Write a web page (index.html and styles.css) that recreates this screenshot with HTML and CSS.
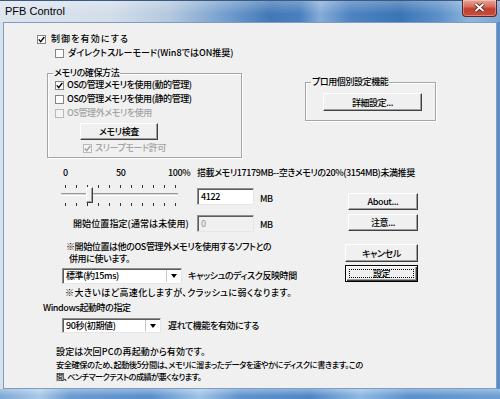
FILE: index.html
```html
<!doctype html>
<html>
  <head>
    <meta charset="utf-8">
    <meta name="viewport" content="width=device-width, initial-scale=1.0">
    <title>PFB Control</title>
    <link rel="stylesheet" href="styles.css">
  </head>
  <body>
    <div class="window">

      <!-- title bar -->
      <div class="titlebar">
        <span class="title">PFB Control</span>
        <div class="close">
          <svg width="33" height="15" viewBox="0 0 33 15">
            <path d="M12.5 4 L20.5 11 M20.5 4 L12.5 11" stroke="#4a1510" stroke-width="3.6" fill="none"/>
            <path d="M12.5 4 L20.5 11 M20.5 4 L12.5 11" stroke="#fff" stroke-width="2" fill="none"/>
          </svg>
        </div>
      </div>

      <div class="client">

        <!-- enable + memory method / pro settings -->
        <div class="section top">
          <div class="col-left">
            <div class="check enable">
              <span class="cb"><svg width="7" height="7" viewBox="0 0 7 7"><path d="M0.8 3.4 L2.7 5.6 L6.3 1" /></svg></span>制御を有効にする
            </div>
            <div class="check direct"><span class="cb"></span>ダイレクトスルーモード(Win8ではON推奨)</div>

            <fieldset class="group mem">
              <legend>メモリの確保方法</legend>
              <div class="check first">
                <span class="cb"><svg width="7" height="7" viewBox="0 0 7 7"><path d="M0.8 3.4 L2.7 5.6 L6.3 1" /></svg></span>OSの管理メモリを使用(動的管理)
              </div>
              <div class="check"><span class="cb"></span>OSの管理メモリを使用(静的管理)</div>
              <div class="check disabled"><span class="cb"></span>OS管理外メモリを使用</div>
              <button class="btn memcheck">メモリ検査</button>
              <div class="check disabled sleep">
                <span class="cb"><svg width="7" height="7" viewBox="0 0 7 7"><path d="M0.8 3.4 L2.7 5.6 L6.3 1" /></svg></span>スリープモード許可
              </div>
            </fieldset>
          </div>

          <div class="col-right">
            <fieldset class="group pro">
              <legend>プロ用個別設定機能</legend>
              <button class="btn detail">詳細設定...</button>
            </fieldset>
          </div>
        </div>

        <!-- memory size slider -->
        <div class="section slider-area">
          <div class="col-left">
            <div class="scale-row">
              <span class="s0">0</span>
              <span class="s50">50</span>
              <span class="s100">100%</span>
              <span class="mem-info">搭載メモリ17179MB--空きメモリの20%(3154MB)未満推奨</span>
            </div>

            <div class="size-row">
              <div class="slider">
                <div class="ticks">
                  <span></span><span></span><span></span><span></span><span></span><span></span>
                  <span></span><span></span><span></span><span></span><span></span>
                </div>
                <div class="track"></div>
                <div class="ticks bottom">
                  <span></span><span></span><span></span><span></span><span></span><span></span>
                  <span></span><span></span><span></span><span></span><span></span>
                </div>
                <div class="thumb"></div>
              </div>
              <div class="field size">4122</div>
              <span class="unit">MB</span>
            </div>

            <div class="start-row">
              <span class="start-label">開始位置指定(通常は未使用)</span>
              <div class="field off">0</div>
              <span class="unit">MB</span>
            </div>
          </div>

          <div class="col-right">
            <button class="btn side about">About...</button>
            <button class="btn side notice">注意...</button>
          </div>
        </div>

        <!-- cache timing / dialog buttons -->
        <div class="section cache-area">
          <div class="col-left">
            <div class="note">
              <div class="l1">※開始位置は他のOS管理外メモリを使用するソフトとの</div>
              <div class="l2">併用に使います。</div>
            </div>
            <div class="combo-row">
              <div class="combo wide"><span class="value">標準(約15ms)</span><span class="drop"></span></div>
              <span class="combo-label">キャッシュのディスク反映時間</span>
            </div>
            <div class="warn">※大きいほど高速化しますが、クラッシュに弱くなります。</div>
          </div>

          <div class="col-right">
            <button class="btn side cancel">キャンセル</button>
            <button class="btn side ok default"><span class="focus"></span>設定</button>
          </div>
        </div>

        <!-- startup delay + info -->
        <div class="startup">
          <div class="startup-title">Windows起動時の指定</div>
          <div class="combo-row delay">
            <div class="combo narrow"><span class="value">90秒(初期値)</span><span class="drop"></span></div>
            <span class="combo-label">遅れて機能を有効にする</span>
          </div>
          <div class="info">
            <div class="i1">設定は次回PCの再起動から有効です。</div>
            <div class="i2">安全確保のため、起動後5分間は、メモリに溜まったデータを速やかにディスクに書きます。この</div>
            <div class="i3">間、ベンチマークテストの成績が悪くなります。</div>
          </div>
        </div>

      </div>

      <div class="bottom-frame"></div>
    </div>
  </body>
</html>
```

FILE: styles.css
```css
body {
  margin: 0;
  background-color: #fff;
  color: #000;
  font-family: "Noto Sans CJK JP", "Noto Sans", sans-serif;
  font-size: 9px;
  font-weight: 500;
  letter-spacing: -0.4px;
  font-feature-settings: "palt";
}

.window {
  width: 500px;
  height: 399px;
  display: flex;
  flex-direction: column;
  overflow: hidden;
  background: linear-gradient(to right, #d6e1ec, #c6d6e7 40%, #6e9dd1 75%, #5a8dc6);
}

/* title bar */
.titlebar {
  height: 22px;
  flex: none;
  display: flex;
  box-sizing: border-box;
  border-top: 1px solid #3a5a80;
  background:
    linear-gradient(to bottom, rgba(255,255,255,0.25), rgba(255,255,255,0) 60%),
    linear-gradient(to right, #dde5ee 0%, #d3deea 22%, #b3c8df 34%, #6f9bcc 46%, #4379b7 54%, #4a80bf 60%, #86acd8 64%, #4f84c1 70%, #3b74b5 80%, #5e91ca 88%, #8fb5de 94%, #7aa6d6 100%);
}
.title {
  font-family: "Liberation Sans", sans-serif;
  font-size: 11px;
  font-weight: 400;
  letter-spacing: 0;
  line-height: 20px;
  padding-left: 5px;
}
.close {
  margin-left: auto;
  margin-right: 3px;
  margin-top: -1px;
  width: 35px;
  height: 17px;
  box-sizing: border-box;
  border: 1px solid #5b2620;
  border-top: none;
  border-radius: 0 0 4px 4px;
  background: linear-gradient(to bottom, #e8a497 0%, #d7705f 40%, #c2402f 55%, #c94c39 100%);
  box-shadow: inset 0 0 0 1px rgba(255,255,255,0.3);
}
.close svg {
  display: block;
}

/* client area */
.client {
  height: 367px;
  flex: none;
  margin: 0 3px;
  box-sizing: border-box;
  border: 1px solid #7f9dc0;
  background-color: #f0f0f0;
  overflow: hidden;
}

.section {
  display: grid;
  grid-template-columns: 297px 1fr;
}
.col-left, .col-right {
  display: flex;
  flex-direction: column;
  align-items: flex-start;
  white-space: nowrap;
}

/* checkboxes */
.check {
  display: flex;
  align-items: center;
  height: 14px;
  line-height: 14px;
}
.cb {
  width: 9px;
  height: 9px;
  box-sizing: border-box;
  border: 1px solid #858585;
  background-color: #fff;
  margin-right: 3px;
  flex: none;
}
.cb svg {
  display: block;
  margin: 0;
}
.cb path {
  stroke: #000;
  stroke-width: 1.4;
  fill: none;
}
.check.disabled {
  color: #a3a3a3;
}
.check.disabled .cb {
  border-color: #b9b9b9;
  background-color: #f4f4f4;
}
.check.disabled .cb path {
  stroke: #a0a0a0;
}

.top .col-left {
  padding-top: 9px;
}
.enable {
  margin-left: 33px;
  letter-spacing: 1.1px;
}
.enable .cb {
  margin-right: 5px;
}
.direct {
  margin-left: 51px;
  letter-spacing: 0;
}
.direct .cb {
  margin-right: 4px;
}

/* group boxes */
.group {
  margin: 0;
  padding: 0;
  box-sizing: border-box;
  border: 1px solid #a5a5a5;
  box-shadow: 1px 1px 0 #fff, inset 1px 1px 0 #fff;
  min-width: 0;
}
.group legend {
  padding: 0 1px;
  margin-left: 5px;
  line-height: 14px;
}

.mem {
  margin-top: 6px;
  margin-left: 43px;
  width: 195px;
  padding-bottom: 2px;
}
.mem .check {
  margin-left: 7px;
}
.mem .check.first {
  margin-top: -2px;
}
.mem .check.sleep {
  margin-left: 35px;
  margin-top: 1px;
}

.pro {
  margin-top: 52px;
  margin-left: 4px;
  width: 131px;
  padding-bottom: 9px;
}

/* buttons */
.btn {
  display: flex;
  align-items: center;
  justify-content: center;
  position: relative;
  padding: 0;
  margin: 0;
  font: inherit;
  letter-spacing: inherit;
  color: #000;
  background-color: #f0f0f0;
  box-sizing: border-box;
  border: 1px solid;
  border-color: #fff #404040 #404040 #fff;
  box-shadow: inset -1px -1px 0 #a0a0a0;
}
.memcheck {
  width: 78px;
  height: 17px;
  margin-top: 3px;
  margin-left: 32px;
}
.detail {
  width: 99px;
  height: 18px;
  margin-top: 4px;
  margin-left: 17px;
}
.side {
  width: 70px;
  height: 17px;
}
.about {
  margin-top: 27px;
  margin-left: 47px;
}
.notice {
  margin-top: 4px;
  margin-left: 47px;
}
.cancel {
  width: 73px;
  height: 18px;
  margin-top: 4px;
  margin-left: 44px;
}
.ok {
  width: 73px;
  margin-top: 3px;
  margin-left: 44px;
}
.btn.default {
  border-color: #000;
  box-shadow: inset 1px 1px 0 #fff, inset -1px -1px 0 #404040, inset -2px -2px 0 #a0a0a0;
}
.btn .focus {
  position: absolute;
  left: 3px;
  top: 3px;
  right: 3px;
  bottom: 3px;
  border: 1px dotted #000;
}

/* slider area */
.slider-area {
  margin-top: 8px;
}
.scale-row {
  display: flex;
  line-height: 14px;
  margin-left: 59px;
}
.s0 {
  width: 53px;
}
.s50 {
  width: 52px;
}
.s100 {
  width: 29px;
}

.size-row {
  display: flex;
  align-items: flex-start;
  margin-top: 4px;
}
.slider {
  position: relative;
  width: 117px;
  height: 22px;
  margin-left: 57px;
}
.ticks {
  display: flex;
  justify-content: space-between;
  width: 111px;
  height: 3px;
  margin: 1px 0 0 4px;
}
.ticks span {
  width: 1px;
  background-color: #333;
}
.ticks.bottom {
  margin-top: 7px;
}
.track {
  height: 3px;
  margin-top: 5px;
  box-sizing: border-box;
  border-top: 1px solid #9a9a9a;
  border-bottom: 1px solid #fff;
  background-color: #dadada;
}
.thumb {
  position: absolute;
  left: 25px;
  top: 3px;
  width: 7px;
  height: 16px;
  box-sizing: border-box;
  background-color: #f0f0f0;
  border: 1px solid;
  border-color: #fff #404040 #404040 #fff;
  box-shadow: inset -1px -1px 0 #a0a0a0;
}

.field {
  width: 57px;
  height: 17px;
  box-sizing: border-box;
  padding-left: 3px;
  line-height: 15px;
  background-color: #fff;
  border: 1px solid;
  border-color: #8e8e8e #e6e6e6 #e6e6e6 #8e8e8e;
  box-shadow: inset 1px 1px 0 #5c5c5c;
}
.field.size {
  margin-left: 19px;
  margin-top: 4px;
}
.field.off {
  background-color: #f0f0f0;
  color: #a0a0a0;
}
.unit {
  line-height: 14px;
  margin-left: 6px;
}
.size-row .unit {
  margin-top: 8px;
}

.start-row {
  display: flex;
  align-items: center;
  margin-top: 9px;
}
.start-label {
  width: 124px;
  margin-left: 69px;
  line-height: 14px;
  letter-spacing: 0.1px;
}
.start-row .unit {
  padding-top: 2px;
}

/* cache timing */
.cache-area {
  margin-top: 8px;
}
.note {
  margin-top: 1px;
  line-height: 12px;
}
.note .l1 {
  margin-left: 62px;
}
.note .l2 {
  margin-left: 65px;
}

.combo-row {
  display: flex;
  align-items: center;
  margin-top: 3px;
}
.combo {
  display: flex;
  margin-left: 58px;
  box-sizing: border-box;
  background-color: #fff;
  border: 1px solid;
  border-color: #8e8e8e #e6e6e6 #e6e6e6 #8e8e8e;
  box-shadow: inset 1px 1px 0 #5c5c5c;
}
.combo.wide {
  width: 120px;
  height: 16px;
}
.combo.narrow {
  width: 99px;
  height: 15px;
}
.combo .value {
  flex: 1;
  padding-left: 3px;
  line-height: 14px;
}
.combo .drop {
  width: 13px;
  margin: 1px 1px 1px 0;
  display: flex;
  align-items: center;
  justify-content: center;
  border-left: 1px solid #c8c8c8;
}
.combo .drop::after {
  content: "";
  border-left: 3px solid transparent;
  border-right: 3px solid transparent;
  border-top: 4px solid #000;
}
.combo-label {
  margin-left: 6px;
  line-height: 14px;
}
.warn {
  margin-top: 2px;
  margin-left: 61px;
  line-height: 14px;
  letter-spacing: 0.45px;
}

/* startup */
.startup {
  margin-top: 1px;
  white-space: nowrap;
}
.startup-title {
  margin-left: 39px;
  line-height: 14px;
}
.delay .combo-label {
  margin-left: 7px;
}
.info {
  margin-top: 13px;
  margin-left: 52px;
  line-height: 12px;
}
.info .i1 {
  letter-spacing: 0.15px;
}
.info .i2 {
  font-size: 8.2px;
}
.info .i3 {
  font-size: 8.2px;
  letter-spacing: -0.6px;
}

.bottom-frame {
  flex: 1;
  background:
    linear-gradient(to bottom, rgba(255,255,255,0.35), rgba(255,255,255,0) 70%),
    linear-gradient(to right, #7ea8d6 0%, #a8c8e8 8%, #6a9bd2 14%, #5a8fcc 30%, #9ec2e7 40%, #5e93ce 48%, #4f87c6 62%, #8db8e3 72%, #5b91cd 82%, #6d9fd4 100%);
}
```
